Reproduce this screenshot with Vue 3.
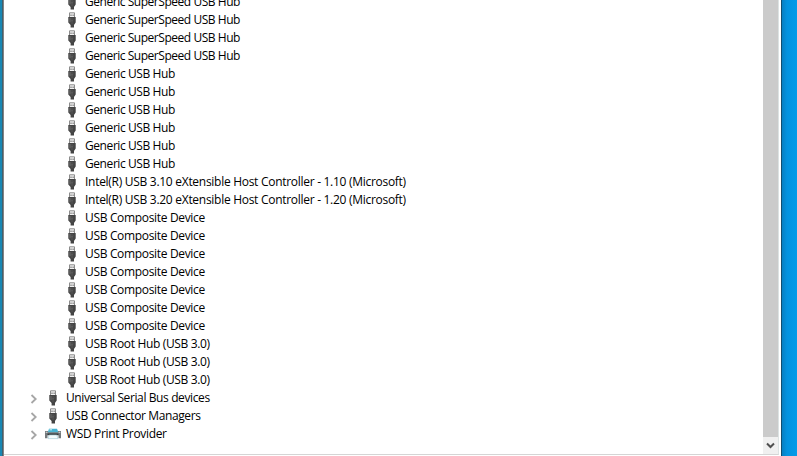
<script setup>
const repeat = (text, kind, n) => Array.from({ length: n }, () => ({ text, kind, icon: 'usb' }))

const rows = [
  ...repeat('Generic SuperSpeed USB Hub', 'speed', 4),
  ...repeat('Generic USB Hub', 'hub', 6),
  { text: 'Intel(R) USB 3.10 eXtensible Host Controller - 1.10 (Microsoft)', kind: 'host', icon: 'usb' },
  { text: 'Intel(R) USB 3.20 eXtensible Host Controller - 1.20 (Microsoft)', kind: 'host', icon: 'usb' },
  ...repeat('USB Composite Device', 'composite', 7),
  ...repeat('USB Root Hub (USB 3.0)', 'root-hub', 3),
  { text: 'Universal Serial Bus devices', kind: 'serial', icon: 'usb', group: true },
  { text: 'USB Connector Managers', kind: 'connector', icon: 'usb', group: true },
  { text: 'WSD Print Provider', kind: 'wsd', icon: 'printer', group: true },
]
</script>

<template>
  <div class="desktop">
    <div class="edge"></div>
    <main class="window">
      <div class="panel">
        <ul class="tree">
          <li v-for="(row, i) in rows" :key="i" class="row" :class="{ group: row.group }">
            <svg v-if="row.group" class="chevron" viewBox="0 0 8 10">
              <path d="M1.5 1 5.7 5 1.5 9" fill="none" stroke="#a6a6a6" stroke-width="1.8" />
            </svg>
            <svg v-if="row.icon === 'usb'" class="icon" viewBox="0 0 16 16">
              <path d="M5.5 6V.8h5V6z" fill="#f1f1f1" stroke="#8b8b8b" />
              <path d="M6.5 2.5h1v1.6h-1zM8.6 2.5h1v1.6h-1z" fill="#666" />
              <path d="M4.3 5h7.4v5.4L10 13v2.6H6.6V13L4.3 10.6z" fill="#444" />
              <path d="M5.5 6h1v4.3h-1z" fill="#707070" />
              <path d="M8 6v6M6.8 8 8 9.3 9.4 7.7" fill="none" stroke="#666" stroke-width=".6" />
            </svg>
            <svg v-else class="icon" viewBox="0 0 16 16">
              <path d="M4 2.8h8l1.5 4h-11z" fill="#48b3d2" />
              <path d="M4.5 2.8h2.5v1.6H4.5z" fill="#a9dfe9" />
              <path d="M0 5h3v1.3h10V5h3v7.2h-2.5v-3h-11v3H0z" fill="#73797c" />
              <path d="M.7 5.8h1.8v1.2H.7zM13.5 5.8h1.8v1.2h-1.8z" fill="#c3c8ca" />
              <path d="M2.5 7.5h11v1.6h-11z" fill="#383c3f" />
              <path d="M4.2 9h7.6l1.2 3.6H3z" fill="#f5fbfc" stroke="#9bc6d2" stroke-width=".6" />
            </svg>
            <span class="label" :class="row.kind">{{ row.text }}</span>
          </li>
        </ul>
        <div class="scrollbar">
          <div class="thumb"></div>
          <div class="down">
            <svg width="9" height="8" viewBox="0 0 9 8">
              <path d="M1 1.5 4.5 5 8 1.5" fill="none" stroke="#505050" stroke-width="2" />
            </svg>
          </div>
        </div>
      </div>
    </main>
    <div class="wallpaper"></div>
  </div>
</template>

<style>
body { background: #fff; overflow: hidden; }
</style>

<style scoped>
.desktop { display: flex; width: 797px; height: 456px; overflow: hidden; background: #fff; }
.edge { width: 4px; flex: none; background: linear-gradient(90deg, #1987b3 0 2px, #41606d 2px 3px, #858585 3px); }
.window { flex: 1; min-width: 0; border-right: 1px solid #114d70; background: #fff; }
.panel { display: flex; justify-content: space-between; height: 454px; margin-right: 2px; border-right: 1px solid #dce3e3; border-bottom: 1px solid #d5d5d5; overflow: hidden; }
.tree { list-style: none; margin: -7px 0 0; padding: 0; }
.row { display: flex; align-items: center; height: 18px; padding-left: 59.5px; }
.group { padding-left: 26px; }
.chevron { width: 8px; height: 10px; flex: none; margin: 2px 7px 0 0; }
.icon { width: 16px; height: 16px; flex: none; margin-right: 5.5px; }
.group .icon { margin-right: 5px; }
.label { font: 12px/18px "Open Sans", "Noto Sans", sans-serif; color: #000; white-space: nowrap; }
.speed { letter-spacing: -.46px; }
.hub { letter-spacing: -.42px; }
.host { letter-spacing: -.285px; }
.composite { letter-spacing: -.33px; }
.root-hub { letter-spacing: -.34px; }
.serial, .connector { letter-spacing: -.39px; }
.wsd { letter-spacing: -.34px; }
.scrollbar { display: flex; flex-direction: column; width: 15px; background: #f0f0f0; }
.thumb { height: 437px; background: #cbcbcb; }
.down { display: flex; flex: 1; align-items: center; justify-content: center; }
.wallpaper { width: 15px; flex: none; background: linear-gradient(90deg, #087fc1, #0492df 5px, #039be9); }
</style>
